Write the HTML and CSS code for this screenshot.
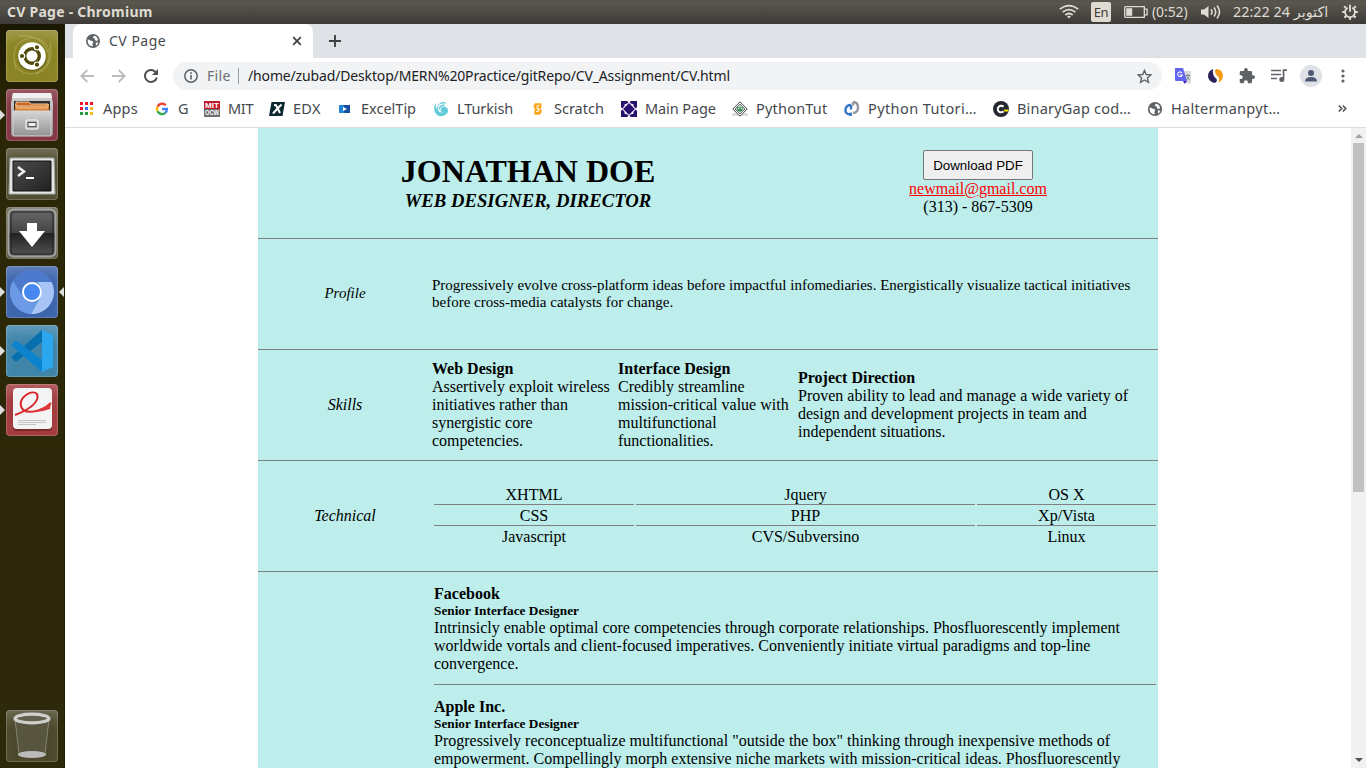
FILE: index.html
```html
<!DOCTYPE html>
<html lang="en">
<head>
<meta charset="utf-8">
<title>CV Page</title>
<link rel="stylesheet" href="styles.css">
</head>
<body>
<header class="menubar">
  <span class="win-title">CV Page - Chromium</span>
  <div class="indicators">
    <svg class="wifi" width="20" height="16" viewBox="0 0 20 16" fill="none" stroke="#dfdbd2" stroke-width="1.7"><path d="M.8 5.2Q10-2 19.2 5.2M3.6 8.2Q10 3 16.4 8.2M6.3 11Q10 8 13.7 11"/><path d="M8 12.3Q10 11 12 12.3L10 14.6Z" fill="#dfdbd2" stroke="none"/></svg>
    <span class="lang">En</span>
    <svg class="battery" width="24" height="12" viewBox="0 0 24 12"><path d="M1.5.7h18.8v10.6H1.5a.8.8 0 0 1-.8-.8v-9a.8.8 0 0 1 .8-.8zM20.5 3.2h2.6v5.6h-2.6" fill="none" stroke="#dfdbd2" stroke-width="1.3"/><path d="M2.2 2.2h6v7.6h-6z" fill="#dfdbd2"/></svg>
    <span class="remain">(0:52)</span>
    <svg class="sound" width="20" height="16" viewBox="0 0 20 16"><path d="M0 5.5h3L7.5 2v12L3 10.5H0z" fill="#dfdbd2"/><path d="M10 5.3q2 2.7 0 5.4M13 3.5q3.4 4.5 0 9M16 1.5q5 6.5 0 13" fill="none" stroke="#dfdbd2" stroke-width="1.6"/></svg>
    <span class="clock">22:22 24 اكتوبر</span>
    <svg class="gear" width="16" height="16" viewBox="0 0 16 16" fill="none" stroke="#dfdbd2"><path d="M5.7 3.6a5 5 0 1 0 4.6 0" stroke-width="1.8"/><path d="M8 .8v7" stroke-width="1.9"/><path d="M3.7 3.7L2.2 2.2M12.3 3.7l1.5-1.5M3 8H.2M13 8h2.8M4.2 11.8l-1.8 1.8M11.8 11.8l1.8 1.8M8 13v2.8" stroke-width="2.2"/></svg>
  </div>
</header>
<div class="desktop">
  <nav class="launcher">
    <div class="tile dash"><svg viewBox="0 0 52 52"><g fill="none" stroke="#c8c583" stroke-opacity=".4" stroke-width="1.2"><path d="M10 40Q2 12 24 8Q40 7 44 23M12 6Q37 4 43 25Q43 39 30 44M44 12Q50 40 25 44Q9 43 8 27"/></g><circle cx="26" cy="27" r="14.5" fill="#4c460d" opacity=".4"/><circle cx="26" cy="26" r="13.8" fill="#fff"/><circle cx="26" cy="26" r="7.3" fill="none" stroke="#514a0b" stroke-width="3.4"/><g fill="#514a0b" stroke="#fff" stroke-width="1.2"><circle cx="16" cy="26" r="2.7"/><circle cx="31" cy="17.3" r="2.7"/><circle cx="31" cy="34.7" r="2.7"/></g></svg></div>
    <div class="tile files running"><svg viewBox="0 0 52 52"><defs><linearGradient id="cab" x2="0" y2="1"><stop stop-color="#d5d5d5"/><stop offset="1" stop-color="#929292"/></linearGradient></defs><path d="M7 4h38l2 10v32H5V14z" fill="url(#cab)"/><path d="M7 4h38l1 5H6z" fill="#f0f0f0"/><path d="M8 12h36v11H8z" fill="#30302e"/><path d="M9 15h34v8H9z" fill="#d98133"/><path d="M10 13h13l2 2h17v2H10zM10 19h32" stroke="#f3ca99" fill="#c96828"/><path d="M7 22h38v25H7z" fill="url(#cab)" stroke="#d6d6d6"/><rect x="20" y="31" width="12" height="9" rx="2" fill="#aaa" stroke="#e8e8e8" stroke-width="1.5"/><path d="M22 33.5h8v4h-8z" fill="#eee" stroke="#555"/></svg></div>
    <div class="tile term"><svg viewBox="0 0 52 52"><defs><linearGradient id="scr" x2="1" y2="1"><stop stop-color="#4b4b4b"/><stop offset=".55" stop-color="#353535"/><stop offset="1" stop-color="#202020"/></linearGradient></defs><path d="M4 10h44l1 36H3z" fill="#e5e5e5" stroke="#aaa"/><path d="M7 13h38v30H7z" fill="url(#scr)" stroke="#111"/><path d="M12 19l6 4.5-6 4.5" fill="none" stroke="#eee" stroke-width="2.5"/><path d="M20 30h8" stroke="#fff" stroke-width="2"/></svg></div>
    <div class="tile down"><svg viewBox="0 0 52 52"><defs><linearGradient id="dl" x2="0" y2="1"><stop stop-color="#696969"/><stop offset=".5" stop-color="#444"/><stop offset=".51" stop-color="#222"/><stop offset="1" stop-color="#555"/></linearGradient></defs><rect x="2.5" y="2.5" width="47" height="47" rx="5" fill="url(#dl)" stroke="#a3a3a3" stroke-width="2"/><rect x="5" y="5" width="42" height="42" rx="3" fill="none" stroke="#222"/><path d="M21 16h10v8h8L26 40 13 24h8z" fill="#fff"/></svg></div>
    <div class="tile chromium running active"><svg viewBox="0 0 52 52"><circle cx="26" cy="26" r="22" fill="#5e8cdb"/><path d="M7 15A22 22 0 0 1 45.5 16H26a10 10 0 0 0-9 15z" fill="#4c79cc"/><path d="M45.5 16A22 22 0 0 1 25 48L35 30q3-8-4-14z" fill="#a6c4f5"/><path d="M7 15A22 22 0 0 0 25 48l6-12q-10 2-14-5z" fill="#6c9ae6"/><circle cx="26" cy="26" r="9" fill="#4688f0" stroke="#fff" stroke-width="2"/></svg></div>
    <div class="tile vscode running"><svg viewBox="0 0 52 52"><path d="M36 5v12L10 37l-5-4.5z" fill="#0870af"/><path d="M5 20l5-4.5 26 19V47z" fill="#0c84cd"/><path d="M36 5l11 5v32l-11 5z" fill="#2aa7ee"/></svg></div>
    <div class="tile pdf running"><svg viewBox="0 0 52 52"><rect x="7" y="5" width="39" height="42" rx="4" fill="#641c21" opacity=".6"/><rect x="7" y="4" width="39" height="41" rx="4" fill="#f4f4f4"/><path d="M9 31C25 25 34 17 31 10C26 5 13 13 15 22C17 31 34 29 45 19" fill="none" stroke="#d8262b" stroke-width="2"/><path d="M18 27Q27 31 45 19L44 25Q31 30 18 27" fill="#df393d"/><path d="M12 36.5h28M12 38.5h28M12 40.5h18" stroke="#b8b8b8" stroke-width=".8"/></svg></div>
    <div class="tile trash"><svg viewBox="0 0 52 52"><path d="M9 9l4 35q13 6 26 0l4-35" fill="#62604f" fill-opacity=".55" stroke="#918f83" stroke-width=".8"/><ellipse cx="26" cy="44.5" rx="14" ry="3.5" fill="#bbb"/><ellipse cx="26" cy="8.5" rx="17" ry="4.3" fill="#625f4c" stroke="#cfcfcc" stroke-width="3.2"/></svg></div>
  </nav>
  <main class="browser">
    <div class="tabstrip">
      <div class="tab">
        <svg class="globe" width="14" height="14" viewBox="0 0 16 16"><circle cx="8" cy="8" r="8" fill="#5f6368"/><path d="M2 6q3 2 5 2 2 .5 1 2-1.5 1 0 4-5-.2-6-5zM10 2q-3 1-2 2.500 3 0 2 2 1 2 3.500 1Q14 4 10 2M11 10q2-1 3 0-1 3-3 3.500 1-2 0-3.500" fill="#fff"/></svg>
        <span class="tab-title">CV Page</span>
        <svg width="10" height="10" viewBox="0 0 10 10" stroke="#3c4043" stroke-width="1.7"><path d="M1.2 1.2l7.6 7.6M8.8 1.2L1.2 8.8"/></svg>
      </div>
      <svg class="newtab" width="12" height="12" viewBox="0 0 12 12" stroke="#3c4043" stroke-width="1.9"><path d="M6 0v12M0 6h12"/></svg>
    </div>
    <div class="toolbar">
      <div class="navs">
        <svg width="14" height="14" viewBox="0 0 14 14" fill="none" stroke="#babcbe" stroke-width="1.8"><path d="M14 7H1.5M7.3 1L1.3 7l6 6"/></svg>
        <svg width="14" height="14" viewBox="0 0 14 14" fill="none" stroke="#babcbe" stroke-width="1.8"><path d="M0 7h12.5M6.7 1l6 6-6 6"/></svg>
        <svg width="14" height="14" viewBox="0 0 14 14" fill="none"><path d="M11.6 3.1A6 6 0 1 0 12.8 8.5" stroke="#4d5156" stroke-width="2"/><path d="M14 0v6H8z" fill="#4d5156"/></svg>
      </div>
      <div class="omnibox">
        <svg width="14" height="14" viewBox="0 0 14 14"><circle cx="7" cy="7" r="6.2" fill="none" stroke="#5f6368" stroke-width="1.5"/><path d="M7 6v4.5M7 3.3v1.6" stroke="#5f6368" stroke-width="1.6"/></svg>
        <span class="scheme">File</span><i class="bar"></i><span class="url">/home/zubad/Desktop/MERN%20Practice/gitRepo/CV_Assignment/CV.html</span>
        <svg class="star" width="15" height="15" viewBox="0 0 16 16" fill="none" stroke="#5f6368" stroke-width="1.5"><path d="M8 1.5l1.9 4.4 4.8.4-3.6 3.2 1.1 4.7L8 11.7l-4.2 2.5 1.1-4.7L1.3 6.3l4.8-.4z"/></svg>
      </div>
      <div class="extensions">
        <svg width="16" height="16" viewBox="0 0 16 16"><path d="M7 3h9v12.5H9z" fill="#d8d8d8"/><path d="M0 0h8l4 13H1.2A1.2 1.2 0 0 1 0 11.8z" fill="#6366f1"/><path d="M8 13h4l-2.5 2.8z" fill="#4b0cc2"/><path d="M7 5A2.3 2.3 0 1 0 7.2 7H5" fill="none" stroke="#fff" stroke-width="1.1"/><path d="M10.5 7.5H15M12.7 6v1.5M11.5 12l2.5-4M11.5 8.5l3 3.5" stroke="#75899a"/></svg>
        <svg width="15" height="14" viewBox="0 0 15 14"><path d="M5 0Q0 2 0 7t6 7q4-1 2.5-4Q4 7 5 0" fill="#2d205b"/><path d="M8 0q6 0 7 6 0 6-5 7.5 2-3 .5-5.5Q5 3 8 0" fill="#f99b16"/></svg>
        <svg width="16" height="16" viewBox="1 1 22 22" fill="#5f6368"><path d="M20.5 11H19V7a2 2 0 0 0-2-2h-4V3.500a2.500 2.500 0 0 0-5 0V5H4a2 2 0 0 0-2 2v3.800h1.500a2.700 2.700 0 0 1 0 5.400H2V20a2 2 0 0 0 2 2h3.800v-1.500a2.700 2.700 0 0 1 5.400 0V22H17a2 2 0 0 0 2-2v-4h1.500a2.500 2.500 0 0 0 0-5z"/></svg>
        <svg width="16" height="14" viewBox="0 0 16 14"><path d="M0 1.5h10M0 5.5h10M0 9.5h6M12.5 10V1.2H16" fill="none" stroke="#5f6368" stroke-width="1.7"/><circle cx="10.8" cy="10.6" r="2.5" fill="#5f6368"/></svg>
        <svg width="22" height="22" viewBox="0 0 22 22"><circle cx="11" cy="11" r="11" fill="#dee1e6"/><circle cx="11" cy="8" r="3" fill="#515873"/><path d="M5 16.5q0-4.5 6-4.5t6 4.500z" fill="#515873"/></svg>
        <svg width="4" height="14" viewBox="0 0 4 14" fill="#5f6368"><circle cx="2" cy="2" r="1.6"/><circle cx="2" cy="7" r="1.6"/><circle cx="2" cy="12" r="1.6"/></svg>
      </div>
    </div>
    <div class="bookmarks">
      <div class="bm apps"><svg viewBox="0 0 16 16"><path d="M1 1h3v3H1zM6 1h3v3H6zM11 1h3v3h-3zM1 6h3v3H1z" fill="#f01428"/><path d="M6 6h3v3H6z" fill="#4169f0"/><path d="M1 11h3v3H1zM6 11h3v3H6z" fill="#1f9a3f"/><path d="M11 6h3v3h-3zM11 11h3v3h-3z" fill="#f9b916"/></svg><span>Apps</span></div>
      <div class="bm g"><svg viewBox="0 0 16 16" fill="none" stroke-width="2.4"><path d="M11.8 4.3A5 5 0 0 0 3.5 5.8" stroke="#ea4335"/><path d="M3.5 5.8a5 5 0 0 0 0 4.5" stroke="#fbbc05"/><path d="M3.5 10.3a5 5 0 0 0 7.8 1.5" stroke="#34a853"/><path d="M11.3 11.8A5 5 0 0 0 12.9 8H8" stroke="#4285f4"/></svg><span>G</span></div>
      <div class="bm mit"><svg viewBox="0 0 16 16"><path d="M0 0h16v8H0z" fill="#c2182b"/><path d="M0 8h16v8H0z" fill="#6f6f6f"/><text x="1" y="6.6" class="tiny" textLength="14" lengthAdjust="spacingAndGlyphs">MIT</text><text x="1" y="14.2" class="tiny" textLength="14" lengthAdjust="spacingAndGlyphs">OCW</text></svg><span>MIT</span></div>
      <div class="bm edx"><svg viewBox="0 0 16 16"><path d="M2.5 1H16l-2.5 14H0z" fill="#0b2931"/><path d="M5 4l2 .2 4 7.8M12.5 3.5Q8 8 4 12.5" fill="none" stroke="#fff" stroke-width="2"/></svg><span>EDX</span></div>
      <div class="bm excel"><svg viewBox="0 0 16 16"><path d="M2 4h6v8H2z" fill="#2286d8"/><path d="M7 4h6v8H7z" fill="#164f9f"/><path d="M6 6l4 2-4 2z" fill="#fff"/></svg><span>ExcelTip</span></div>
      <div class="bm turk"><svg viewBox="0 0 16 16"><path d="M3 2Q-.5 7 2.5 12t8.5 2.5 3.5-7Q11 4 8.5 7T10 11.5Q5 12 5 7.5T9 2.5h5Q9-.5 6 3T4 9Q2 6 3 2" fill="#62cbd8"/><path d="M6.5 8.5q0-4 5-4.5" fill="none" stroke="#62cbd8" stroke-width="1.3"/></svg><span>LTurkish</span></div>
      <div class="bm scratch"><svg viewBox="0 0 16 16"><path d="M5 2.200h6.500v4l-1 1q3 3.500-1 6.500H4.300V9.500L5 8Q2 5 5 2.200" fill="#faa51b"/><path d="M9.500 5Q8 3.600 7 5t2 3q1 3-3 2.500M6.500 8h3" fill="none" stroke="#fff" stroke-width="1"/></svg><span>Scratch</span></div>
      <div class="bm main"><svg viewBox="0 0 16 16"><path d="M0 0h16v16H0z" fill="#28106e"/><path d="M8 1.500l6.500 6.500L8 14.500 1.500 8z" fill="none" stroke="#fff" stroke-width="1.1"/><path d="M6 0h4L8 1.500zM6 16h4l-2-1.500zM0 6v4l1.500-2zM16 6v4l-1.500-2z" fill="#fff"/><path d="M3.500 3.500l2-1v2l-2 1zM12.500 3.500l-2-1v2l2 1zM3.500 12.500l2 1v-2l-2-1zM12.500 12.500l-2 1v-2l2-1z" fill="#fff"/><path d="M8 2.300L13.700 8 8 13.700 2.300 8z" fill="#28106e"/></svg><span>Main Page</span></div>
      <div class="bm ptut"><svg viewBox="0 0 16 16"><path d="M0 12h16v3H0z" fill="#ddd"/><path d="M8 .8L15.200 8 8 15.200.8 8z" fill="#fff" stroke="#444"/><path d="M8 3l5 5-5 5-5-5z" fill="#b8d9c6" stroke="#555" stroke-width=".8"/><path d="M4.800 5.500l2 1 1-.5 1 .5 2-1-.5 4q-2.300 2-5 0z" fill="#39855a"/><circle cx="6.700" cy="7.500" r=".7" fill="#fff"/><circle cx="9.300" cy="7.500" r=".7" fill="#fff"/></svg><span>PythonTut</span></div>
      <div class="bm ptor"><svg viewBox="0 0 16 16" fill="none" stroke-width="2.4"><path d="M6.700 15v-3.500M7 4Q2 4 1.500 8.500T6 13.500M7 4v4.500" stroke="#3575c9"/><path d="M9 1q5 .3 5 5.500T9 12M9 1v3.500" stroke="#92989e"/></svg><span>Python Tutori…</span></div>
      <div class="bm gap"><svg viewBox="0 0 16 16"><circle cx="8" cy="8" r="8" fill="#252830"/><path d="M10.500 5.800a3.300 3.300 0 1 0 0 4.500" fill="none" stroke="#fff" stroke-width="2"/><path d="M11 9.500h4.500" stroke="#f6e600" stroke-width="2"/></svg><span>BinaryGap cod…</span></div>
      <div class="bm halt"><svg viewBox="-1 -1 18 18"><circle cx="8" cy="8" r="8" fill="#5f6368"/><path d="M2 6q3 2 5 2 2 .5 1 2-1.500 1 0 4-5-.2-6-5zM10 2q-3 1-2 2.500 3 0 2 2 1 2 3.500 1Q14 4 10 2M11 10q2-1 3 0-1 3-3 3.500 1-2 0-3.500" fill="#fff"/></svg><span>Haltermanpyt…</span></div>
      <svg class="more" width="9" height="7" viewBox="0 0 9 7" fill="none" stroke="#4d5156" stroke-width="1.5"><path d="M.8.5l3 3-3 3M4.800.5l3 3-3 3"/></svg>
    </div>
    <div class="viewport">
      <div class="page">
        <div class="cv">
          <section class="row head">
            <div class="who"><h1>JONATHAN DOE</h1><h3>WEB DESIGNER, DIRECTOR</h3></div>
            <div class="contact"><button>Download PDF</button><a href="#">newmail@gmail.com</a><span>(313) - 867-5309</span></div>
          </section>
          <section class="row"><div class="label small">Profile</div><p class="profile">Progressively evolve cross-platform ideas before impactful infomediaries. Energistically visualize tactical initiatives before cross-media catalysts for change.</p></section>
          <section class="row"><div class="label">Skills</div>
            <div class="skills">
              <p><b>Web Design</b><br>Assertively exploit wireless<br>initiatives rather than<br>synergistic core<br>competencies.</p>
              <p><b>Interface Design</b><br>Credibly streamline<br>mission-critical value with<br>multifunctional<br>functionalities.</p>
              <p><b>Project Direction</b><br>Proven ability to lead and manage a wide variety of<br>design and development projects in team and<br>independent situations.</p>
            </div>
          </section>
          <section class="row"><div class="label">Technical</div>
            <div class="tech">
              <span>XHTML</span><span>Jquery</span><span>OS X</span>
              <span>CSS</span><span>PHP</span><span>Xp/Vista</span>
              <span>Javascript</span><span>CVS/Subversino</span><span>Linux</span>
            </div>
          </section>
          <section class="jobs">
            <article><b>Facebook</b><h5>Senior Interface Designer</h5><p>Intrinsicly enable optimal core competencies through corporate relationships. Phosfluorescently implement<br>worldwide vortals and client-focused imperatives. Conveniently initiate virtual paradigms and top-line<br>convergence.</p></article>
            <article><b>Apple Inc.</b><h5>Senior Interface Designer</h5><p>Progressively reconceptualize multifunctional "outside the box" thinking through inexpensive methods of<br>empowerment. Compellingly morph extensive niche markets with mission-critical ideas. Phosfluorescently</p></article>
          </section>
        </div>
      </div>
      <div class="scrollbar"><i class="up"></i><i class="thumb"></i><i class="dn"></i></div>
    </div>
  </main>
</div>
</body>
</html>
```

FILE: styles.css
```css
* { box-sizing: border-box; }
body { margin: 0; width: 1366px; height: 768px; overflow: hidden; font-family: "Noto Sans", sans-serif; }
svg { display: block; flex: none; }
h1, h3, h5, p { margin: 0; }

.menubar { height: 24px; display: flex; align-items: center; justify-content: space-between; padding: 0 8px 0 7px; background: linear-gradient(#55534a, #5a574f 10%, #3d3b37); color: #dfdbd2; white-space: nowrap; }
.win-title { padding-bottom: 2px; font-weight: 700; font-size: 14px; letter-spacing: .25px; }
.indicators { display: flex; align-items: center; font-size: 14px; }
.lang { width: 20px; height: 20px; margin: 0 13px 0 12px; border-radius: 2px; background: #dfdbd2; color: #3f3d38; font-size: 13px; line-height: 20px; text-align: center; letter-spacing: -.4px; }
.remain { width: 36px; margin: 0 13px 0 4px; padding-bottom: 2px; letter-spacing: -.1px; }
.clock { width: 97px; margin: 0 12px 0 12px; padding-bottom: 2px; font-size: 14.4px; font-family: "Noto Sans", "DejaVu Sans", sans-serif; }

.desktop { display: flex; height: 744px; }
.launcher { width: 65px; display: flex; flex-direction: column; gap: 7px; padding: 6px 6px 6px; background: linear-gradient(#1a1703, #2b2706 12%, #2d290a); border-right: 1px solid #201d0a; flex: none; }
.tile { position: relative; width: 52px; height: 52px; border-radius: 4px; flex: none; box-shadow: inset 0 0 0 1px rgba(255,255,255,.18), inset 0 12px 14px -6px rgba(255,255,255,.22); }
.tile svg { width: 52px; height: 52px; }
.dash { background: #8b8424; }
.files { background: #843743; }
.term { background: #514e31; }
.down { background: #5d5b43; }
.chromium { background: #3d65ac; }
.vscode { background: #3f85aa; }
.pdf { background: #a23b3e; }
.trash { background: #4b482c; margin-top: auto; }
.running::before, .active::after { content: ""; position: absolute; top: 21px; left: -6px; border: 5px solid transparent; border-left-color: #dedede; border-right-width: 0; }
.active::after { left: auto; right: -6px; border-right: 5px solid #dedede; border-left-width: 0; }

.browser { flex: 1; min-width: 0; display: flex; flex-direction: column; background: #fff; }
.tabstrip { height: 34px; background: #dee1e6; display: flex; align-items: center; padding-left: 8px; }
.tab { width: 240px; height: 34px; background: #fff; border-radius: 8px 8px 0 0; display: flex; align-items: center; padding: 0 11px 0 13px; }
.tab-title { flex: 1; margin-left: 9px; padding-bottom: 2px; font-size: 14px; letter-spacing: .5px; color: #45494d; }
.newtab { margin-left: 16px; }
.toolbar { height: 35px; display: flex; align-items: center; padding: 1px 6px 0 15px; }
.navs { width: 93px; display: flex; gap: 18px; flex: none; }
.omnibox { width: 989px; height: 28px; border-radius: 14px; background: #f1f3f4; display: flex; align-items: center; padding: 0 10px 0 11px; font-size: 14px; flex: none; white-space: nowrap; }
.scheme { width: 24px; margin-left: 9px; padding-bottom: 2px; color: #6b6f73; letter-spacing: .3px; }
.bar { width: 1px; height: 16px; margin: 0 9px 0 7px; background: #9a9da1; }
.url { padding-bottom: 2px; color: #202124; letter-spacing: -.15px; }
.star { margin-left: auto; }
.extensions { display: grid; grid-template-columns: repeat(6, 32px); align-items: center; justify-items: center; margin-left: 5px; }
.bookmarks { height: 35px; display: flex; align-items: center; padding: 0 0 3px 14px; border-bottom: 1px solid #dadce0; font-size: 14.5px; color: #45494d; white-space: nowrap; }
.bm { display: flex; align-items: center; gap: 8px; flex: none; }
.bm span { padding-bottom: 2px; }
.bm svg { width: 16px; height: 16px; overflow: visible; }
.tiny { font: 900 7px/1 "Liberation Sans", sans-serif; fill: #fff; letter-spacing: 0; }
.apps { width: 75px; letter-spacing: .2px; }
.g { width: 50px; }
.mit { width: 65px; letter-spacing: -.3px; }
.edx { width: 68px; letter-spacing: .3px; }
.excel { width: 96px; }
.turk { width: 97px; letter-spacing: -.1px; }
.scratch { width: 91px; }
.main { width: 111px; letter-spacing: -.1px; }
.ptut { width: 112px; letter-spacing: .2px; }
.ptor { width: 149px; letter-spacing: .4px; }
.gap { width: 154px; letter-spacing: .2px; }
.halt { width: 191px; letter-spacing: .3px; }

.viewport { flex: 1; min-height: 0; display: flex; overflow: hidden; }
.page { flex: 1; padding-left: 193px; overflow: hidden; }
.cv { width: 900px; background: #bdeeec; color: #000; font: 16px/18px "Liberation Serif", "Times New Roman", serif; }
.row { height: 111px; display: flex; align-items: center; border-bottom: 1px solid #808080; }
.who { width: 540px; padding-bottom: 2px; text-align: center; }
.who h1 { font-size: 32px; line-height: 37px; }
.who h3 { font-size: 18.72px; line-height: 21px; font-style: italic; }
.contact { width: 360px; display: flex; flex-direction: column; align-items: center; }
.contact button { width: 110px; height: 30px; padding: 0; border: 1px solid #767676; border-radius: 2px; background: #efefef; color: #000; font: 13.333px "Liberation Sans", Arial, sans-serif; }
.contact a { color: #f00; }
.label { width: 174px; text-align: center; font-style: italic; flex: none; }
.small { font-size: 15px; padding-bottom: 2px; }
.profile { font-size: 15px; line-height: 17px; }
.skills { display: grid; grid-template-columns: 186px 180px 360px; align-items: center; white-space: nowrap; }
.tech { width: 722px; margin-left: 2px; display: grid; grid-template-columns: 200px 339px 179px; gap: 2px; text-align: center; }
.tech span { border-bottom: 1px solid #808080; height: 19px; }
.tech span:nth-child(n+7) { border: 0; height: 18px; }
.jobs { padding: 2px 2px 0 176px; display: grid; gap: 2px; white-space: nowrap; }
.jobs article { height: 111px; padding-top: 11px; border-bottom: 1px solid #808080; }
.jobs b { display: block; }
.jobs h5 { font-size: 13.28px; line-height: 16px; }
.scrollbar { width: 15px; background: #f1f1f1; display: flex; flex-direction: column; align-items: center; flex: none; }
.up { margin: 6px 0 5px; border: 4px solid transparent; border-top: 0; border-bottom-color: #a3a3a3; }
.thumb { width: 11px; height: 349px; background: #c1c1c1; }
.dn { margin: auto 0 6px; border: 4px solid transparent; border-bottom: 0; border-top-color: #505050; }
```
